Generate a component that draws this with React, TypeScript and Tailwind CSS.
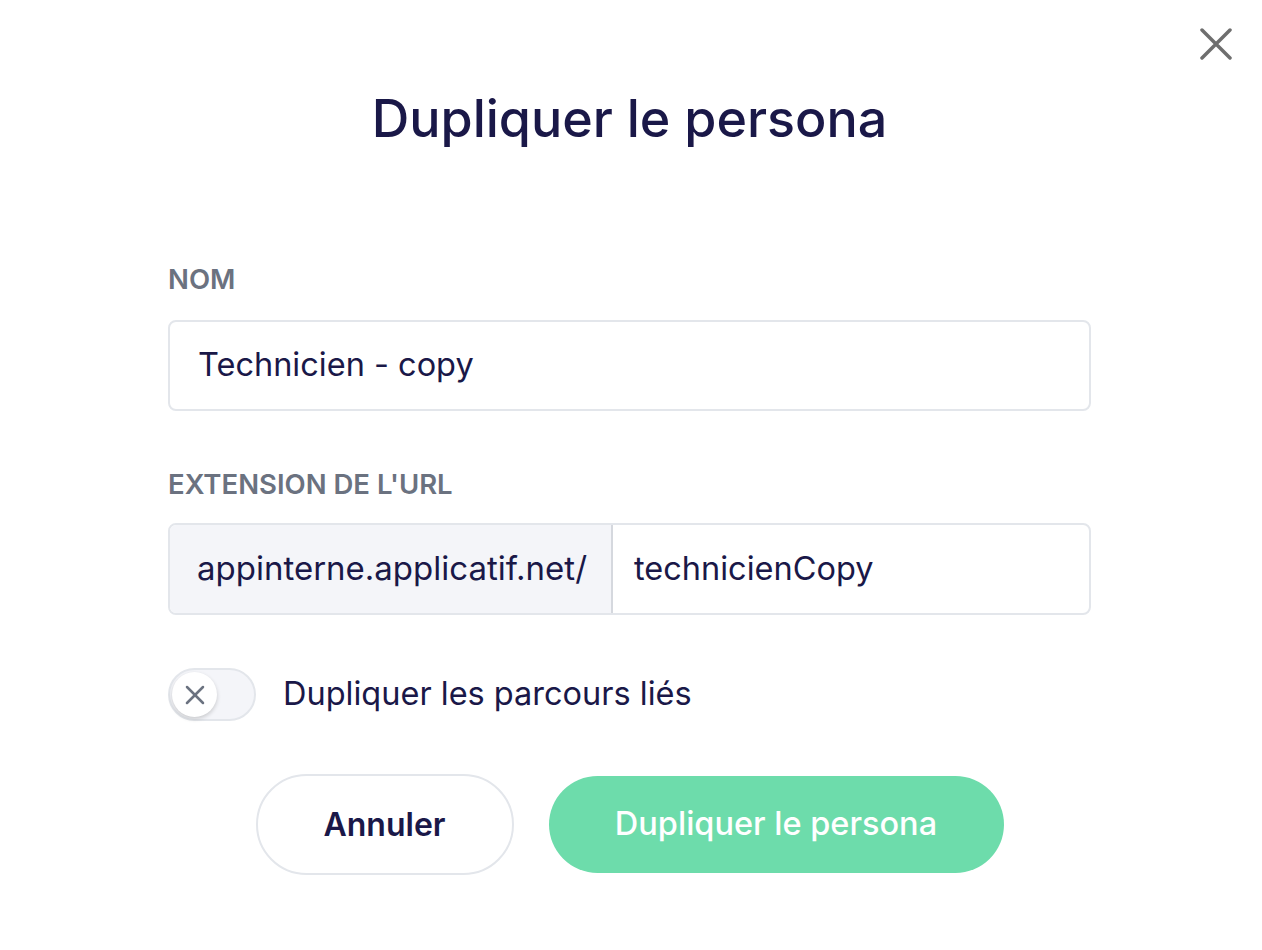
import { X } from 'lucide-react';

/* ── Toggle (off state) ── */

function Toggle() {
  return (
    <div className="relative h-[53px] w-[88px] shrink-0 rounded-full border-2 border-[#e3e6eb] bg-[#f4f5f9]">
      <div className="absolute left-[2px] top-[2px] flex h-[45px] w-[45px] items-center justify-center rounded-full bg-white shadow-[0_2px_4px_rgba(0,0,0,0.18)]">
        <X className="h-[32px] w-[32px] text-[#6b7280]" strokeWidth={1.9} />
      </div>
    </div>
  );
}

export default function App() {
  return (
    <div className="relative min-h-[950px] w-full bg-white font-['Inter',sans-serif] text-[#1a1848]">
      <button className="absolute right-[30px] top-[28px] text-[#6e6e6e]">
        <svg width="32" height="32" viewBox="0 0 32 32" fill="none" stroke="currentColor" strokeWidth="3.5" strokeLinecap="round">
          <path d="M2 2L30 30M30 2L2 30" />
        </svg>
      </button>

      <div className="ml-[168px] w-[923px] pt-[88px]">
        <h1 className="text-center text-[52px] font-medium leading-[62px]">Dupliquer le persona</h1>

        <div className="mt-[113px]">
          <label className="block text-[27.5px] font-semibold uppercase leading-[32px] text-[#6b7280]">Nom</label>
          <div className="mt-[25px] flex h-[91px] items-center rounded-[8px] border-2 border-[#e3e6eb] px-[28px] text-[32.5px]">
            Technicien - copy
          </div>
        </div>

        <div className="mt-[57px]">
          <label className="block text-[27.5px] font-semibold uppercase leading-[32px] text-[#6b7280]">Extension de l'URL</label>
          <div className="mt-[23px] flex h-[92px] overflow-hidden rounded-[8px] border-2 border-[#e3e6eb] text-[32.5px]">
            <div className="flex w-[443px] shrink-0 items-center border-r-2 border-[#d5d8de] bg-[#f4f5f9] pl-[27px] text-[33px]">appinterne.applicatif.net/</div>
            <div className="flex items-center px-[21px]">technicienCopy</div>
          </div>
        </div>

        <div className="mt-[53px] flex items-center gap-[27px]">
          <Toggle />
          <span className="text-[32.5px]">Dupliquer les parcours liés</span>
        </div>

        <div className="mt-[53px] flex items-center justify-center gap-[35px]">
          <button className="h-[101px] w-[258px] rounded-full border-2 border-[#e3e6eb] bg-white text-[32px] font-semibold">
            Annuler
          </button>
          <button className="h-[97px] w-[455px] rounded-full bg-[#6ddcab] text-[32.5px] font-medium text-white">
            Dupliquer le persona
          </button>
        </div>
      </div>
    </div>
  );
}
